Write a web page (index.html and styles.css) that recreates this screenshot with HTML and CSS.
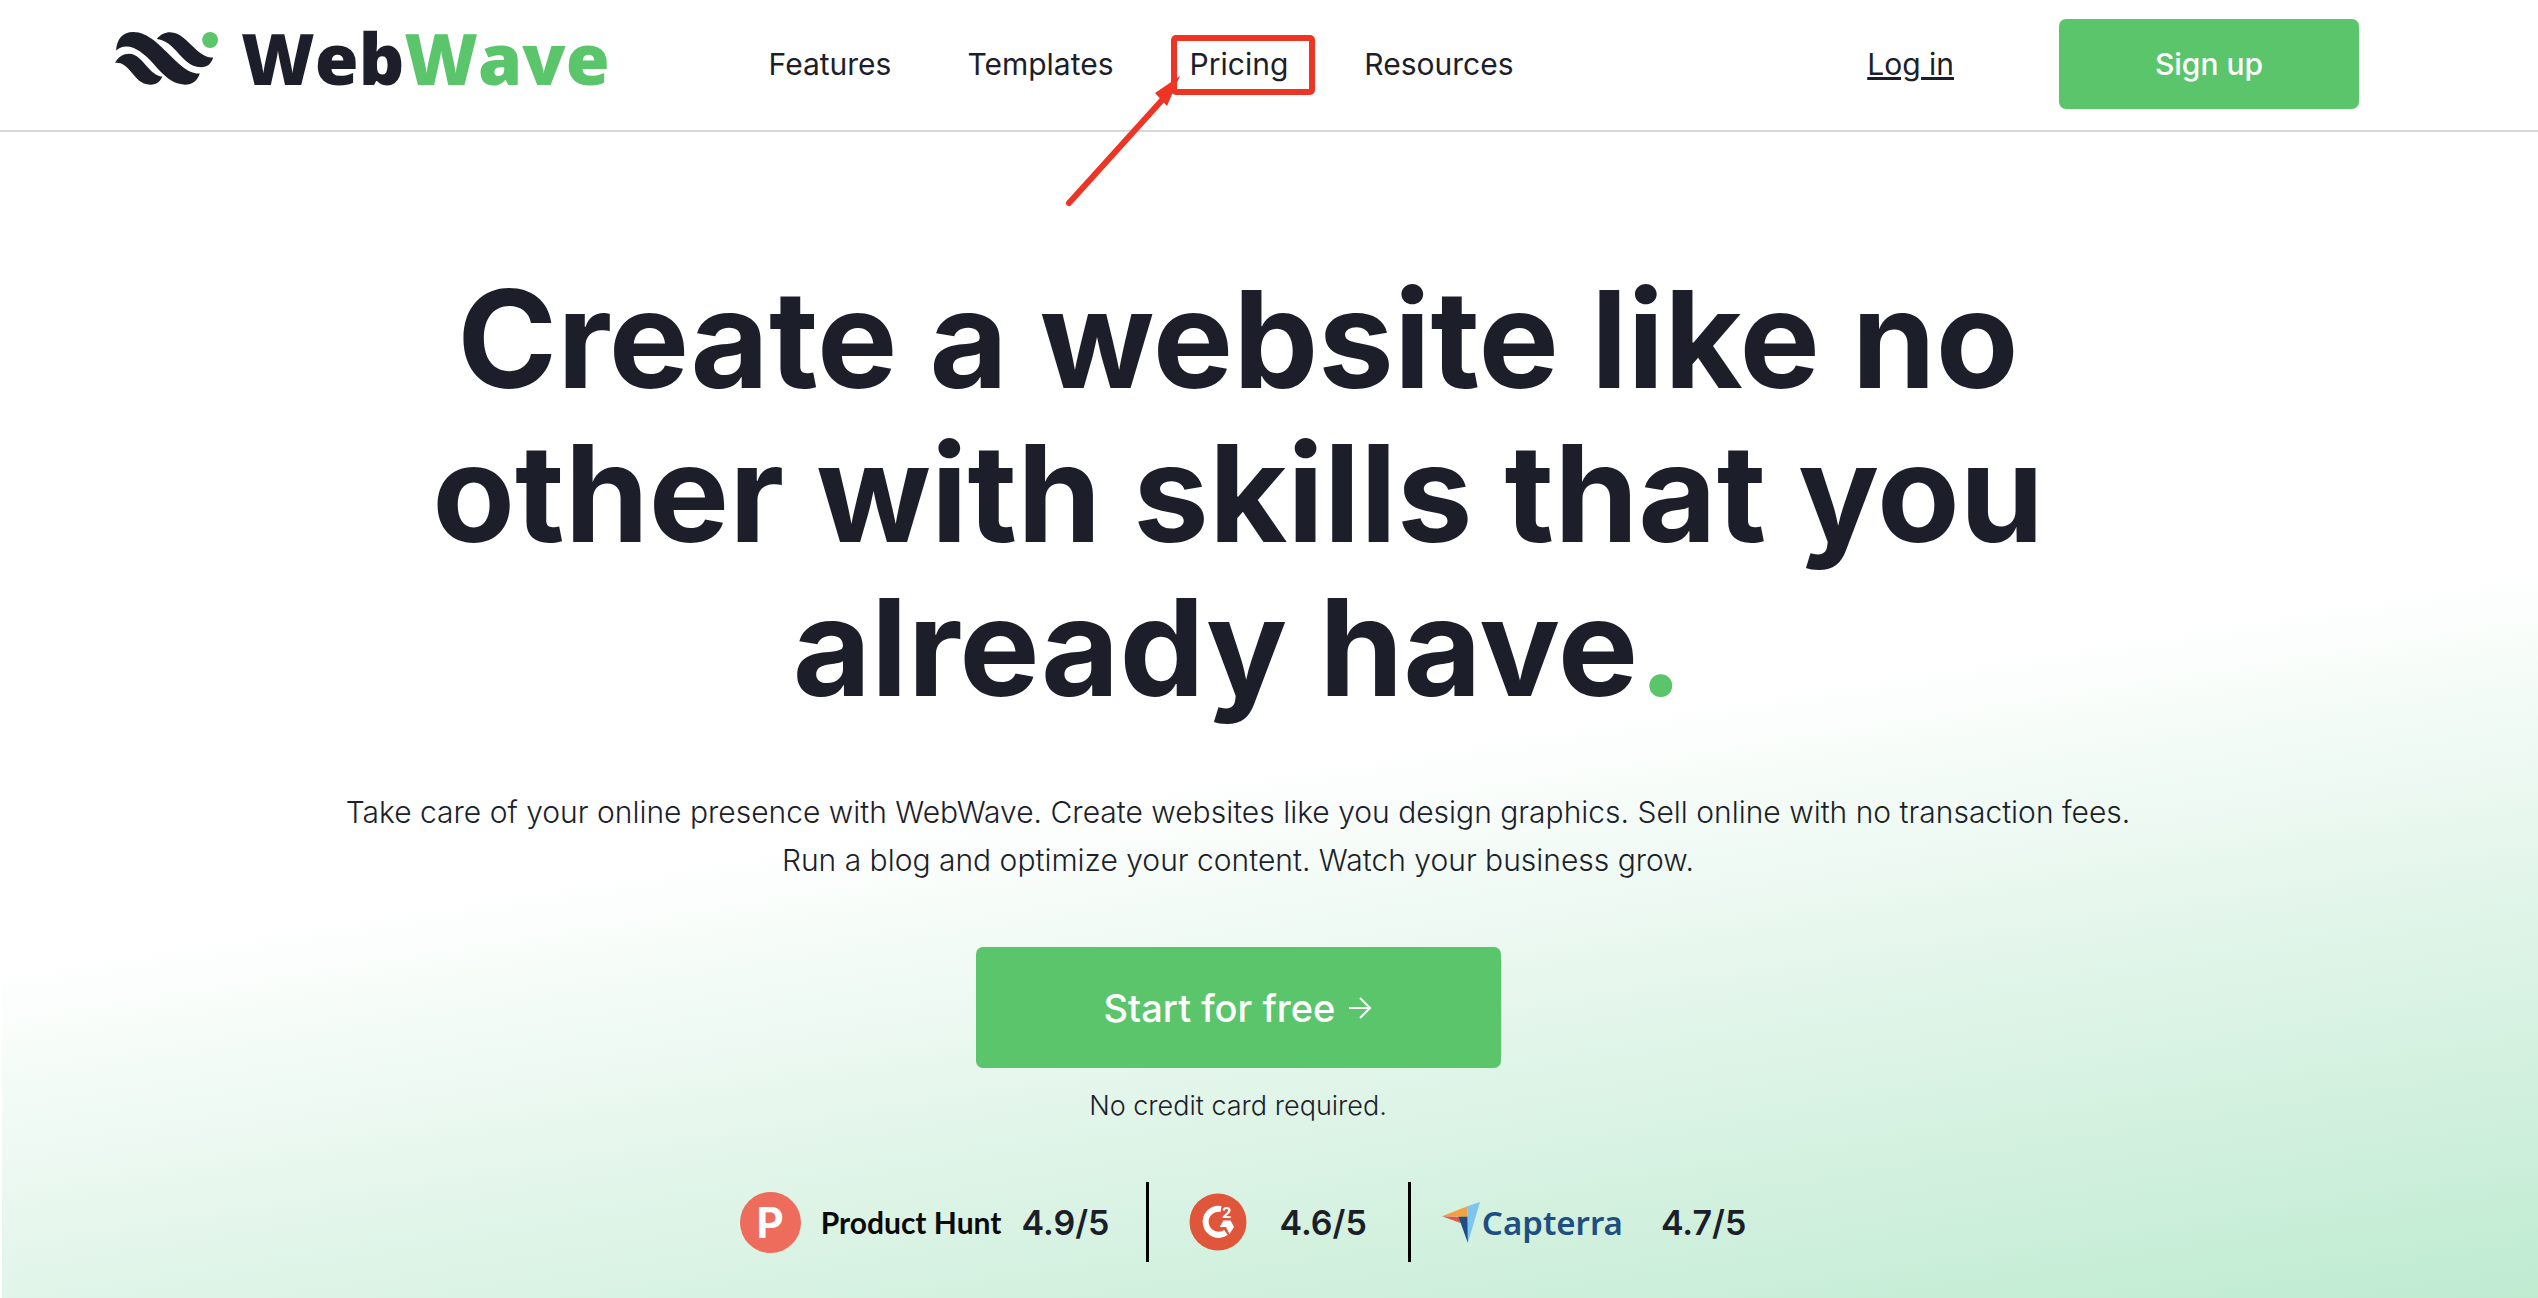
FILE: index.html
```html
<!DOCTYPE html>
<html lang="en">
<head>
    <meta charset="UTF-8">
    <meta name="viewport" content="width=device-width, initial-scale=1.0">
    <title>WebWave</title>
    <link rel="stylesheet" href="styles.css">
</head>
<body>
    <header class="header">
        <a class="logo" href="#">
            <svg class="logo-mark" viewBox="72 66 300 158" preserveAspectRatio="none" aria-hidden="true">
                <path d="M75 121 C78 85 95 66 125 66 C168 66 200 104 235 138 C268 172 290 190 319 190 C312 212 298 223 276 223 C240 223 212 195 184 161 C150 121 108 92 75 121Z"/>
                <path d="M194 87 C205 73 218 67 232 67 C262 67 282 95 305 115 C325 134 340 143 358 142 C352 160 342 171 322 171 C290 171 270 145 250 122 C230 100 215 90 194 87Z"/>
                <path d="M72 158 C82 140 96 131 113 131 C135 131 150 152 170 174 C185 191 197 198 210 199 C203 215 193 223 176 223 C145 223 135 203 118 184 C102 163 88 155 72 158Z"/>
                <ellipse class="logo-dot" cx="349" cy="90" rx="23" ry="24"/>
            </svg>
            <span class="logo-text">Web<span class="green">Wave</span></span>
        </a>
        <nav class="nav">
            <a href="#">Features</a>
            <a href="#">Templates</a>
            <a class="marked" href="#">Pricing
                <svg class="marker" viewBox="0 0 260 180" aria-hidden="true">
                    <rect x="111" y="8" width="138" height="54" rx="2"/>
                    <path d="M6 173 L110 58"/>
                    <polygon points="117,46 92,63 104,76"/>
                </svg>
            </a>
            <a href="#">Resources</a>
        </nav>
        <a class="login" href="#">Log in</a>
        <button class="btn btn-signup">Sign up</button>
    </header>

    <main class="hero">
        <h1>Create a website like no other with skills that you already have<span class="green">.</span></h1>
        <p class="lead">Take care of your online presence with WebWave. Create websites like you design graphics. Sell online with no transaction fees. Run a blog and optimize your content. Watch your business grow.</p>
        <button class="btn btn-start">
            Start for free
            <svg class="arrow" viewBox="0 0 24 24" aria-hidden="true"><path d="M1 12 H22 M12 2 L22 12 L12 22"/></svg>
        </button>
        <p class="note">No credit card required.</p>

        <div class="ratings">
            <div class="rating rating-ph">
                <span class="ph-badge">P</span>
                <span class="ph-name">Product Hunt</span>
                <span class="score">4.9/5</span>
            </div>
            <div class="rating rating-g2">
                <svg class="g2-badge" viewBox="-29 -29 58 58" role="img" aria-label="G2">
                    <circle r="28.5"/>
                    <path class="g2-arc" d="M3 -13 A13 13 0 1 0 8 10.5"/>
                    <path class="g2-tip" d="M1.6 5 L5.5 -1.5 H12.6 L16 5 L11.5 12 L8 5Z"/>
                    <text x="4" y="-4">2</text>
                </svg>
                <span class="score">4.6/5</span>
            </div>
            <div class="rating rating-capterra">
                <span class="capterra">
                    <svg class="capterra-mark" viewBox="717 125 97 123" preserveAspectRatio="none" aria-hidden="true">
                        <polygon fill="#7dc4ee" points="782,138 814,125 783,248 782,170"/>
                        <polygon fill="#f2a041" points="717,168 782,138 782,170"/>
                        <polygon fill="#e0584a" points="717,168 760,170 766,189"/>
                        <polygon fill="#1f4e80" points="759,169 782,169 783,248"/>
                    </svg>
                    <span class="capterra-name">Capterra</span>
                </span>
                <span class="score">4.7/5</span>
            </div>
        </div>
    </main>
</body>
</html>
```

FILE: styles.css
```css
* {
    box-sizing: border-box;
}
body {
    display: flex;
    flex-direction: column;
    min-height: 100vh;
    margin: 0;
    background-color: #fff;
    color: #1c1e29;
    font-family: Inter, "Liberation Sans", sans-serif;
    font-size: 30px;
}
a {
    color: inherit;
    text-decoration: none;
}
.green {
    color: #5bc56b;
}
.btn {
    border: none;
    border-radius: 7px;
    background-color: #5bc56b;
    color: #fff;
    font-family: inherit;
    font-weight: 500;
    cursor: pointer;
}
.btn:hover {
    background-color: #4db45d;
}

/* Header */
.header {
    display: flex;
    align-items: center;
    height: 132px;
    padding: 0 179px 2px 115px;
    border-bottom: 2px solid #d8d8d8;
}
.logo {
    display: flex;
    align-items: center;
    gap: 23px;
    padding-bottom: 12px;
}
.logo-mark {
    width: 103px;
    height: 53px;
    fill: #1c1e29;
}
.logo-mark .logo-dot {
    fill: #5bc56b;
}
.logo-text {
    font-family: "Open Sans", sans-serif;
    font-size: 71px;
    font-weight: 800;
    line-height: 80px;
}
.nav {
    display: flex;
    gap: 76px;
    margin-left: 159px;
}
.marked {
    position: relative;
}
/* red box and arrow drawn over the link */
.marker {
    position: absolute;
    top: -16px;
    left: -127px;
    width: 260px;
    height: 180px;
    fill: none;
    stroke: #ee3424;
    stroke-width: 6;
    stroke-linecap: round;
    pointer-events: none;
}
.marker polygon {
    fill: #ee3424;
    stroke: none;
}
.login {
    margin-left: auto;
    text-decoration: underline;
}
.btn-signup {
    width: 300px;
    height: 90px;
    margin-left: 105px;
    font-size: 30px;
}

/* Hero */
.hero {
    display: flex;
    flex: 1;
    flex-direction: column;
    align-items: center;
    padding: 130px 64px 36px 0;
    border-left: 2px solid #fff;
    background: linear-gradient(171deg, #fff 53%, #def4e7 76%, #bfebd1 100%);
    text-align: center;
}
h1 {
    max-width: 1800px;
    margin: 0;
    font-size: 135px;
    font-weight: 700;
    line-height: 154px;
}
.lead {
    max-width: 1820px;
    margin: 64px 0 0;
    font-weight: 300;
    line-height: 48px;
}
.btn-start {
    display: flex;
    justify-content: center;
    align-items: center;
    gap: 13px;
    width: 525px;
    height: 121px;
    margin-top: 63px;
    font-size: 38px;
}
.arrow {
    width: 24px;
    height: 24px;
    fill: none;
    stroke: #fff;
    stroke-width: 2;
}
.note {
    margin: 18px 0 0;
    font-size: 27px;
    font-weight: 300;
    line-height: 40px;
}

/* Ratings */
.ratings {
    display: flex;
    margin-top: 56px;
    padding-left: 10px;
}
.rating {
    display: flex;
    align-items: center;
    height: 80px;
}
.rating + .rating {
    border-left: 3px solid #000;
}
.score {
    font-size: 34px;
    font-weight: 600;
}
.rating-ph {
    gap: 20px;
    padding-right: 37px;
}
.rating-g2 {
    gap: 32px;
    padding: 0 41px 0 40px;
}
.rating-capterra {
    gap: 38px;
    padding-left: 31px;
}
.ph-badge {
    width: 61px;
    height: 61px;
    border-radius: 50%;
    background-color: #ee6c5c;
    color: #fff;
    font-size: 42px;
    font-weight: 700;
    line-height: 61px;
}
.ph-name {
    color: #0a0a0a;
    font-family: Lato, sans-serif;
    font-size: 30px;
    font-weight: 700;
}
.g2-badge {
    width: 58px;
    height: 58px;
    fill: #df563b;
}
.g2-badge .g2-arc {
    fill: none;
    stroke: #fff;
    stroke-width: 6;
}
.g2-badge .g2-tip {
    fill: #fff;
}
.g2-badge text {
    fill: #fff;
    font-size: 15px;
    font-weight: 700;
}
.capterra {
    display: flex;
    align-items: center;
    gap: 2px;
}
.capterra-mark {
    width: 38px;
    height: 41px;
}
.capterra-name {
    color: #1f4e80;
    font-family: "Noto Sans", sans-serif;
    font-size: 33px;
    font-weight: 600;
}
```
